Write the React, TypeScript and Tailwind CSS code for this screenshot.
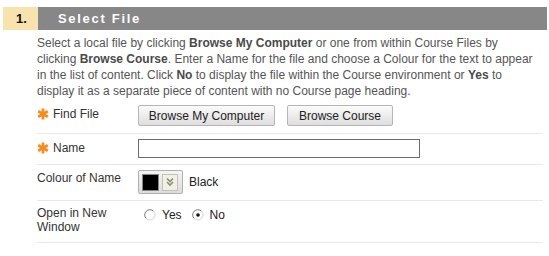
import { useState } from "react";

function Star() {
    return (
        <svg width="12" height="12" viewBox="0 0 12 12" className="shrink-0">
            <g stroke="#f68b1f" strokeWidth="2.8" strokeLinecap="butt">
                <line x1="6" y1="0.5" x2="6" y2="11.5" />
                <line x1="1.2" y1="3.2" x2="10.8" y2="8.8" />
                <line x1="1.2" y1="8.8" x2="10.8" y2="3.2" />
            </g>
        </svg>
    );
}

function Radio({ checked, onClick }: { checked: boolean; onClick: () => void }) {
    return (
        <svg width="12" height="12" viewBox="0 0 12 12" onClick={onClick} className="cursor-pointer">
            <circle cx="6" cy="6" r="5" fill="#fff" />
            <path d="M2.2 9.5 A5 5 0 0 1 9.5 2.2" fill="none" stroke="#7a7a7a" strokeWidth="1" />
            <path d="M9.5 2.2 A5 5 0 0 1 2.2 9.5" fill="none" stroke="#d4d4d4" strokeWidth="1" />
            {checked && <circle cx="6" cy="6" r="1.8" fill="#111" />}
        </svg>
    );
}

function Btn({ label, width }: { label: string; width: string }) {
    return (
        <button
            className={`${width} h-[21px] rounded-[2px] border border-[#b5b5b5] bg-gradient-to-b from-[#fbfbfb] to-[#dedede] text-[12px] text-[#222] leading-none`}
        >
            {label}
        </button>
    );
}

export default function App() {
    const [openNew, setOpenNew] = useState(false);
    const [name, setName] = useState("");

    const em = "font-bold text-[#4a4a4a]";

    return (
        <div className="w-[549px] h-[256px] bg-white font-['Liberation_Sans',Arial,sans-serif] pt-[7px]">
            {/* Step header */}
            <div className="flex h-[23px] ml-[3px] mr-[2px]">
                <div className="w-[35px] bg-[#f8e2ae] flex items-center pl-[13px] text-[13px] font-bold text-[#111]">1.</div>
                <div className="flex-1 bg-[#878787] flex items-center pl-[20px] text-[13px] font-bold text-white tracking-[1.7px]">
                    Select File
                </div>
            </div>

            <div className="pl-[37px] pr-[6px]">
                <p className="mt-[5px] text-[12px] leading-[16px] text-[#555] whitespace-nowrap">
                    Select a local file by clicking <b className={em}>Browse My Computer</b> or one from within Course Files by
                    <br />
                    clicking <b className={em}>Browse Course</b>. Enter a Name for the file and choose a Colour for the text to appear
                    <br />
                    in the list of content. Click <b className={em}>No</b> to display the file within the Course environment or{" "}
                    <b className={em}>Yes</b> to
                    <br />
                    display it as a separate piece of content with no Course page heading.
                </p>

                {/* Find File */}
                <div className="flex h-[35px] pt-[7px] border-b border-[#e8e8e8] text-[12px] leading-[16px] text-[#333]">
                    <div className="w-[101px] flex items-start gap-[4px]">
                        <span className="mt-[2px]"><Star /></span>
                        <span>Find File</span>
                    </div>
                    <div className="flex gap-[12px] -mt-[1px]">
                        <Btn label="Browse My Computer" width="w-[137px]" />
                        <Btn label="Browse Course" width="w-[106px]" />
                    </div>
                </div>

                {/* Name */}
                <div className="flex h-[31px] pt-[5px] border-b border-[#e8e8e8] text-[12px] leading-[16px] text-[#333]">
                    <div className="w-[101px] flex items-start gap-[4px]">
                        <span className="mt-[3px]"><Star /></span>
                        <span className="mt-[1px]">Name</span>
                    </div>
                    <input
                        value={name}
                        onChange={(e) => setName(e.target.value)}
                        className="w-[282px] h-[19px] border border-[#6b6b6b] bg-white outline-none px-1 text-[12px]"
                    />
                </div>

                {/* Colour of Name */}
                <div className="flex h-[36px] pt-[5px] border-b border-[#e8e8e8] text-[12px] leading-[16px] text-[#333]">
                    <div className="w-[101px]">Colour of Name</div>
                    <div className="flex items-center gap-[6px] h-[24px]">
                        <div className="w-[45px] h-[24px] rounded-[2px] border border-[#b0b0b0] bg-gradient-to-b from-[#f4f4f4] to-[#dcdcdc] flex items-center gap-[3px] pl-[3px]">
                            <div className="w-[17px] h-[17px] bg-black border border-[#888]" />
                            <div className="w-[16px] h-[17px] border border-[#c4c4b4] bg-[#f0f0e8] flex items-center justify-center">
                                <svg width="10" height="10" viewBox="0 0 10 10">
                                    <path d="M2 1.5 L5 4.5 L8 1.5 M2 5 L5 8 L8 5" fill="none" stroke="#8f8f6e" strokeWidth="1.6" />
                                </svg>
                            </div>
                        </div>
                        <span className="text-[#222]">Black</span>
                    </div>
                </div>

                {/* Open in New Window */}
                <div className="flex h-[42px] pt-[5px] border-b border-[#e8e8e8] text-[12px] leading-[14px] text-[#333]">
                    <div className="w-[101px]">Open in New<br />Window</div>
                    <div className="flex items-center h-[15px] mt-[1px] pl-[6px] gap-[6px] text-[#222]">
                        <Radio checked={openNew} onClick={() => setOpenNew(true)} />
                        <span>Yes</span>
                        <span className="ml-[4px] flex"><Radio checked={!openNew} onClick={() => setOpenNew(false)} /></span>
                        <span>No</span>
                    </div>
                </div>
            </div>
        </div>
    );
}
